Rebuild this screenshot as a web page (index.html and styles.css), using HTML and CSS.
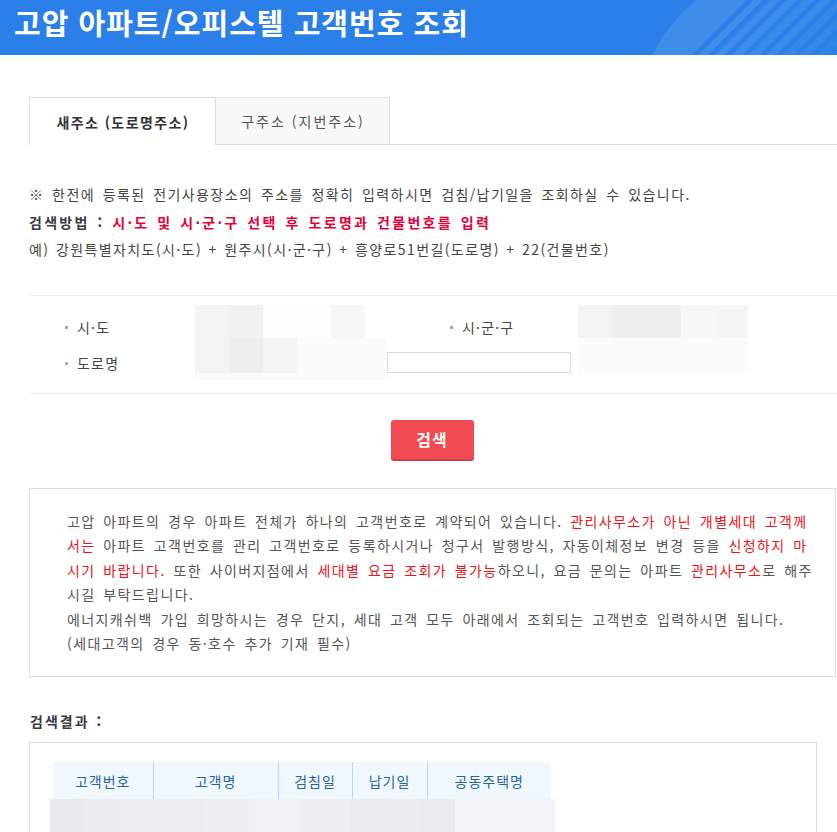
FILE: index.html
```html
<!DOCTYPE html>
<html lang="ko">
<head>
<meta charset="utf-8">
<title>고압 아파트/오피스텔 고객번호 조회</title>
<link rel="stylesheet" href="styles.css">
</head>
<body>
<header class="page-header">
  <h1 class="page-title">고압 아파트/오피스텔 고객번호 조회</h1>
  <svg class="header-deco" width="240" height="55" viewBox="597 0 240 55" aria-hidden="true">
    <defs>
      <clipPath id="circ"><circle cx="790" cy="120" r="152"/></clipPath>
    </defs>
    <g clip-path="url(#circ)" fill="#ffffff">
      <polygon points="597,0 747,0 692,55 597,55" fill-opacity="0.1"/>
      <polygon points="753,0 763,0 708,55 698,55" fill-opacity="0.1"/>
      <polygon points="770,0 780,0 725,55 715,55" fill-opacity="0.1"/>
      <polygon points="787,0 797,0 742,55 732,55" fill-opacity="0.09"/>
      <polygon points="804,0 814,0 759,55 749,55" fill-opacity="0.08"/>
      <polygon points="821,0 831,0 776,55 766,55" fill-opacity="0.07"/>
      <polygon points="838,0 848,0 793,55 783,55" fill-opacity="0.06"/>
      <polygon points="855,0 865,0 810,55 800,55" fill-opacity="0.05"/>
      <polygon points="872,0 882,0 827,55 817,55" fill-opacity="0.04"/>
    </g>
  </svg>
</header>

<main class="content">
  <ul class="tabs">
    <li class="tab tab-active">새주소 (도로명주소)</li>
    <li class="tab">구주소 (지번주소)</li>
  </ul>

  <div class="notice kr">
    <p>※ 한전에 등록된 전기사용장소의 주소를 정확히 입력하시면 검침/납기일을 조회하실 수 있습니다.</p>
    <p class="method"><span class="method-label">검색방법 : </span><span class="method-red">시·도 및 시·군·구 선택 후 도로명과 건물번호를 입력</span></p>
    <p class="example">예) 강원특별자치도(시·도) + 원주시(시·군·구) + 흥양로51번길(도로명) + 22(건물번호)</p>
  </div>

  <div class="search-form">
    <div class="form-row">
      <span class="field-label">시·도</span>
      <div class="blur blur-sido"></div>
      <span class="field-label field-label-right">시·군·구</span>
      <div class="blur blur-sgg"></div>
    </div>
    <div class="form-row">
      <span class="field-label">도로명</span>
      <div class="blur blur-road"></div>
      <div class="road-input"></div>
      <div class="blur blur-faint"></div>
    </div>
  </div>

  <div class="btn-wrap">
    <button class="btn-search" type="button">검색</button>
  </div>

  <div class="info-box kr">
    <p>고압 아파트의 경우 아파트 전체가 하나의 고객번호로 계약되어 있습니다. <span class="red">관리사무소가 아닌 개별세대 고객께<br>서는</span> 아파트 고객번호를 관리 고객번호로 등록하시거나 청구서 발행방식, 자동이체정보 변경 등을 <span class="red">신청하지 마<br>시기 바랍니다.</span> 또한 사이버지점에서 <span class="red">세대별 요금 조회가 불가능</span>하오니, 요금 문의는 아파트 <span class="red">관리사무소</span>로 해주<br>시길 부탁드립니다.</p>
    <p>에너지캐쉬백 가입 희망하시는 경우 단지, 세대 고객 모두 아래에서 조회되는 고객번호 입력하시면 됩니다.</p>
    <p>(세대고객의 경우 동·호수 추가 기재 필수)</p>
  </div>

  <h2 class="result-title">검색결과 :</h2>
  <div class="result-box">
    <table class="result-table">
      <thead>
        <tr>
          <th class="c1">고객번호</th>
          <th class="c2">고객명</th>
          <th class="c3">검침일</th>
          <th class="c4">납기일</th>
          <th class="c5">공동주택명</th>
        </tr>
      </thead>
    </table>
    <div class="blur blur-result"></div>
  </div>
</main>
</body>
</html>
```

FILE: styles.css
```css
* { box-sizing: border-box; }

html, body {
  margin: 0;
  padding: 0;
  background: #ffffff;
}

body {
  font-family: "Noto Sans CJK KR", "Noto Sans", sans-serif;
  color: #444444;
  overflow: hidden;
}

p { margin: 0; }

/* Header */
.page-header {
  position: relative;
  height: 55px;
  background: #2a80e8;
  overflow: hidden;
}

.page-title {
  margin: 0;
  padding-left: 14px;
  font-size: 29px;
  font-weight: 700;
  line-height: 45px;
  color: #ffffff;
  letter-spacing: 1px;
}

.header-deco {
  position: absolute;
  right: 0;
  top: 0;
}

/* Content */
.content {
  padding-left: 29px;
}

.kr {
  font-size: 14px;
  letter-spacing: 1.4px;
  word-spacing: 2.4px;
}

/* Tabs */
.tabs {
  list-style: none;
  margin: 42px 0 0;
  padding: 0;
  display: flex;
  border-bottom: 1px solid #dddddd;
  height: 48px;
}

.tab {
  width: 174px;
  height: 47px;
  display: flex;
  align-items: center;
  justify-content: center;
  background: #f8f8f8;
  border: 1px solid #e2e2e2;
  border-left: none;
  border-bottom: none;
  font-size: 14px;
  letter-spacing: 2px;
  color: #555555;
  padding-left: 1px;
}

.tab-active {
  width: 187px;
  height: 48px;
  margin-bottom: -1px;
  background: #ffffff;
  border: 1px solid #dddddd;
  border-bottom: none;
  font-weight: 700;
  color: #333333;
  letter-spacing: 1.4px;
}

/* Notice */
.notice {
  margin-top: 36px;
  line-height: 27.5px;
  color: #444444;
}

.method {
  font-weight: 700;
  letter-spacing: 2.3px;
  word-spacing: 1.6px;
}

.example {
  word-spacing: 1.2px;
}

.method-label { color: #3b3b45; }
.method-red { color: #e6003a; }

/* Search form */
.search-form {
  margin-top: 31px;
  border-top: 1px solid #ececec;
  border-bottom: 1px solid #ececec;
  padding: 13px 0 12px;
}

.form-row {
  display: flex;
  align-items: center;
  height: 36px;
  padding-left: 36px;
}

.field-label {
  position: relative;
  width: 130px;
  flex: none;
  padding-left: 12px;
  font-size: 14px;
  letter-spacing: 1.2px;
  color: #444444;
}

.field-label::before {
  content: "";
  position: absolute;
  left: 0;
  top: 50%;
  width: 3px;
  height: 3px;
  margin-top: -1px;
  background: #aaaaaa;
}

.field-label-right {
  width: 128px;
  margin-left: 85px;
}

.blur { flex: none; }

.blur-sido {
  width: 170px;
  height: 34px;
  align-self: flex-start;
  margin-top: -4px;
  background: linear-gradient(to right,
    #f3f3f3 0 34px, #f1f1f1 34px 68px, #fdfdfd 68px 136px, #f6f6f6 136px 170px);
}

.blur-sgg {
  width: 170px;
  height: 34px;
  align-self: flex-start;
  margin-top: -4px;
  background: linear-gradient(to right,
    #f3f3f3 0 34px, #efefef 34px 103px, #f7f7f7 103px 138px, #f5f5f5 138px 170px);
}

.blur-road {
  width: 192px;
  height: 42px;
  align-self: flex-start;
  margin-top: -7px;
  background:
    linear-gradient(to bottom, transparent 0 35px, #fafafa 35px 42px),
    linear-gradient(to right,
      #f3f3f3 0 34px, #eeeeee 34px 68px, #f4f4f4 68px 102px, #fbfbfb 102px 192px);
}

.road-input {
  flex: none;
  width: 184px;
  height: 21px;
  border: 1px solid #dcdcdc;
  background: #ffffff;
}

.blur-faint {
  width: 170px;
  height: 35px;
  align-self: flex-start;
  margin-top: -7px;
  margin-left: 7px;
  background: #fbfbfb;
}

/* Button */
.btn-wrap {
  display: flex;
  justify-content: center;
  margin-top: 26px;
}

.btn-search {
  width: 83px;
  height: 41px;
  border: none;
  border-bottom: 2px solid #d23c45;
  border-radius: 3px;
  background: #f04a53;
  color: #ffffff;
  font-family: "Noto Sans CJK KR", sans-serif;
  font-size: 16px;
  font-weight: 700;
  letter-spacing: 1px;
  padding: 0;
  margin-right: 2px;
}

/* Info box */
.info-box {
  margin: 27px 1px 0 0;
  border: 1px solid #dddddd;
  padding: 20px 20px 20px 37px;
  line-height: 24.6px;
  color: #555555;
  white-space: nowrap;
  overflow: hidden;
}

.red { color: #f01419; }

/* Results */
.result-title {
  margin: 34px 0 0;
  font-size: 14px;
  font-weight: 700;
  line-height: 20px;
  color: #3b3b45;
  letter-spacing: 2px;
  word-spacing: 1px;
  padding-left: 1px;
}

.result-box {
  margin: 11px 20px 0 0;
  border: 1px solid #dddddd;
  padding: 19px 0 40px 23px;
}

.result-table {
  border-collapse: collapse;
}

.result-table th {
  height: 37px;
  padding: 0;
  background: #f0f7fd;
  color: #2a64a0;
  font-size: 14px;
  font-weight: 400;
  letter-spacing: 1px;
  border-left: 1px solid #b9d5ee;
  text-align: center;
}

.result-table th.c1 { border-left: none; width: 100px; }
.result-table th.c2 { width: 125px; }
.result-table th.c3 { width: 74px; }
.result-table th.c4 { width: 75px; }
.result-table th.c5 { width: 124px; }

.blur-result {
  width: 505px;
  height: 40px;
  margin-left: -3px;
  background: linear-gradient(to right,
    #e9eaec 0 33px, #ebeced 33px 70px, #eceef0 70px 155px, #eef1f3 155px 205px,
    #f0f3f5 205px 250px, #eef1f3 250px 300px, #e9ecee 300px 335px,
    #ebecee 335px 370px, #e9ebec 370px 405px, #f2f3f4 405px 505px);
}
```
